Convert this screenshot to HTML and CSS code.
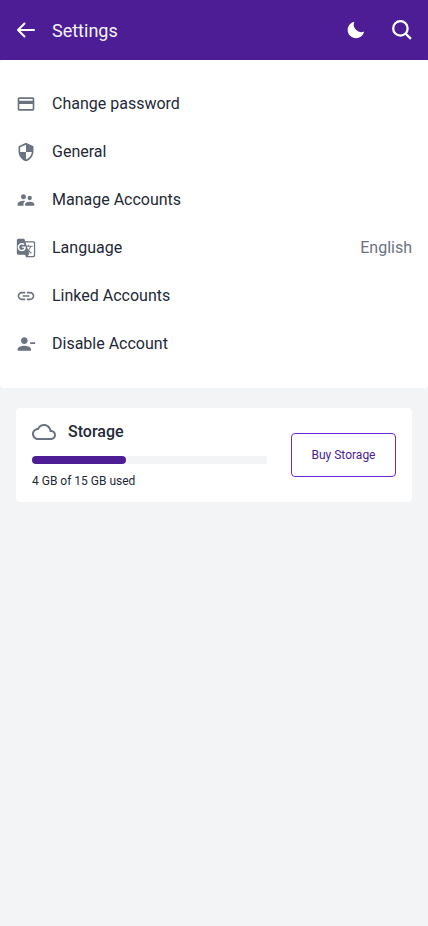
FILE: index.html
```html
<!DOCTYPE html>
<html lang="en">
<head>
<meta charset="utf-8">
<meta name="viewport" content="width=device-width, initial-scale=1">
<title>Settings</title>
<link rel="stylesheet" href="styles.css">
</head>
<body>
<header class="topbar">
  <button class="icon-button" type="button" aria-label="Back">
    <svg class="icon" viewBox="0 0 20 20" fill="none" stroke="currentColor" stroke-width="2" stroke-linecap="round" stroke-linejoin="round"><path d="M8.500 3.500L2 10l6.500 6.500M2 10h16"/></svg>
  </button>
  <h1 class="title">Settings</h1>
  <div class="actions">
    <button class="icon-button" type="button" aria-label="Dark mode">
      <svg class="icon" viewBox="0 0 24 24" fill="currentColor"><path d="M12 11.807A9.002 9.002 0 0 1 10.049 2a9.942 9.942 0 0 0-5.120 2.735c-3.905 3.905-3.905 10.237 0 14.142 3.906 3.906 10.237 3.905 14.143 0a9.946 9.946 0 0 0 2.735-5.119A9.003 9.003 0 0 1 12 11.807z"/></svg>
    </button>
    <button class="icon-button" type="button" aria-label="Search">
      <svg class="icon-large" viewBox="0 0 24 24" fill="none" stroke="currentColor" stroke-width="2.300"><circle cx="10.400" cy="10.400" r="7.200"/><path d="M15.500 15.500l5.400 5.400"/></svg>
    </button>
  </div>
</header>
<main>
  <nav class="menu" aria-label="Settings">
    <a class="row" href="#password">
      <svg class="icon" viewBox="0 0 24 24" fill="currentColor"><path d="M20 4H4c-1.110 0-1.990.89-1.990 2L2 18c0 1.110.89 2 2 2h16c1.110 0 2-.89 2-2V6c0-1.110-.89-2-2-2zm0 14H4v-6h16v6zm0-10H4V6h16v2z"/></svg>
      <span>Change password</span>
    </a>
    <a class="row" href="#general">
      <svg class="icon" viewBox="0 0 24 24" fill="currentColor"><path d="M12 1L3 5v6c0 5.550 3.840 10.740 9 12 5.160-1.260 9-6.450 9-12V5l-9-4zm0 10.990h7c-.53 4.120-3.280 7.790-7 8.940V12H5V6.300l7-3.110v8.800z"/></svg>
      <span>General</span>
    </a>
    <a class="row" href="#accounts">
      <svg class="icon" viewBox="0 0 24 24" fill="currentColor"><path d="M16.500 12c1.380 0 2.490-1.120 2.490-2.500S17.880 7 16.500 7C15.120 7 14 8.120 14 9.500s1.120 2.500 2.500 2.500zM9 11c1.660 0 2.990-1.340 2.990-3S10.660 5 9 5C7.340 5 6 6.340 6 8s1.340 3 3 3zm7.500 3c-1.830 0-5.500.92-5.500 2.750V19h11v-2.250c0-1.830-3.670-2.750-5.500-2.750zM9 13c-2.330 0-7 1.170-7 3.500V19h7v-2.250c0-.85.33-2.340 2.370-3.470C10.500 13.100 9.660 13 9 13z"/></svg>
      <span>Manage Accounts</span>
    </a>
    <a class="row" href="#language">
      <svg class="icon" viewBox="0 0 24 24" fill="currentColor"><path d="M21 4H11l-1-3H3c-1.100 0-2 .9-2 2v15c0 1.100.9 2 2 2h8l1 3h9c1.100 0 2-.9 2-2V6c0-1.100-.9-2-2-2zM7 16c-2.760 0-5-2.240-5-5s2.240-5 5-5c1.350 0 2.480.5 3.350 1.300L9.030 8.570c-.38-.36-1.040-.78-2.030-.78-1.740 0-3.150 1.440-3.150 3.210S5.260 14.210 7 14.210c2.010 0 2.840-1.440 2.920-2.410H7v-1.710h4.680c.07.31.12.61.12 1.020C11.800 13.970 9.890 16 7 16zm6.170-5.420h3.700c-.43 1.250-1.110 2.430-2.050 3.470-.31-.35-.6-.72-.86-1.100l-.79-2.370zm8.330 9.920c0 .55-.45 1-1 1H14l2-2.500-1.040-3.100 3.100 3.100.92-.92-3.300-3.250.02-.02c1.130-1.250 1.930-2.690 2.400-4.220H20v-1.300h-4.530V8h-1.290v1.290h-1.440L11.460 5.500h9.040c.55 0 1 .45 1 1v14z"/></svg>
      <span>Language</span>
      <span class="value">English</span>
    </a>
    <a class="row" href="#linked">
      <svg class="icon" viewBox="0 0 24 24" fill="currentColor"><path d="M3.900 12c0-1.710 1.390-3.100 3.100-3.100h4V7H7c-2.760 0-5 2.240-5 5s2.240 5 5 5h4v-1.900H7c-1.710 0-3.100-1.390-3.100-3.100zM8 13h8v-2H8v2zm9-6h-4v1.900h4c1.710 0 3.100 1.390 3.100 3.100s-1.390 3.100-3.100 3.100h-4V17h4c2.760 0 5-2.240 5-5s-2.240-5-5-5z"/></svg>
      <span>Linked Accounts</span>
    </a>
    <a class="row" href="#disable">
      <svg class="icon" viewBox="0 0 24 24" fill="currentColor"><path d="M14 8c0-2.210-1.790-4-4-4S6 5.790 6 8s1.790 4 4 4 4-1.790 4-4zm3 2v2h6v-2h-6zM2 18v2h16v-2c0-2.660-5.330-4-8-4s-8 1.340-8 4z"/></svg>
      <span>Disable Account</span>
    </a>
  </nav>
  <section class="storage" aria-labelledby="storage-title">
    <div class="usage">
      <div class="storage-head">
        <svg class="icon-large" viewBox="0 0 24 24" fill="currentColor"><path d="M19.350 10.040C18.670 6.590 15.640 4 12 4 9.110 4 6.600 5.640 5.350 8.040 2.340 8.360 0 10.910 0 14c0 3.310 2.690 6 6 6h13c2.760 0 5-2.240 5-5 0-2.640-2.050-4.780-4.650-4.960zM19 18H6c-2.210 0-4-1.790-4-4 0-2.050 1.530-3.760 3.560-3.970l1.070-.11.5-.95C8.080 7.140 9.940 6 12 6c2.620 0 4.880 1.860 5.390 4.430l.3 1.500 1.530.11c1.560.1 2.780 1.410 2.780 2.960 0 1.650-1.350 3-3 3z"/></svg>
        <h2 class="storage-title" id="storage-title">Storage</h2>
      </div>
      <div class="track"><div class="fill" style="width: 40%"></div></div>
      <p class="note">4 GB of 15 GB used</p>
    </div>
    <button class="buy" type="button">Buy Storage</button>
  </section>
</main>
</body>
</html>
```
FILE: styles.css
```css
* {
  box-sizing: border-box;
}

body {
  margin: 0;
  background: #f3f4f6;
  color: #1f2937;
  font-family: Roboto, "Liberation Sans", sans-serif;
  font-size: 16px;
  line-height: 24px;
}

h1,
h2,
p {
  margin: 0;
}

svg {
  display: block;
  flex: none;
}

.icon {
  width: 20px;
  height: 20px;
}

.icon-large {
  width: 24px;
  height: 24px;
}

.topbar {
  display: flex;
  align-items: center;
  gap: 16px;
  height: 60px;
  padding: 0 14px 0 16px;
  background: #4c1d95;
  color: #fff;
}

.icon-button {
  padding: 0;
  border: 0;
  background: none;
  color: inherit;
  cursor: pointer;
}

.title {
  color: #f3f4f6;
  font-size: 18px;
  font-weight: 400;
  line-height: 25px;
}

.actions {
  display: flex;
  align-items: center;
  gap: 24px;
  margin-left: auto;
}

.menu {
  padding: 20px 0;
  border-radius: 4px;
  background: #fff;
}

.row {
  display: flex;
  align-items: center;
  gap: 16px;
  padding: 12px 16px;
  color: inherit;
  text-decoration: none;
}

.row .icon,
.storage .icon-large {
  color: #6b7280;
}

.value {
  margin-left: auto;
  color: #6b7280;
}

.storage {
  display: flex;
  align-items: center;
  gap: 24px;
  margin: 20px 16px;
  padding: 12px 16px;
  border-radius: 4px;
  background: #fff;
}

.usage {
  flex: 1;
}

.storage-head {
  display: flex;
  align-items: center;
  gap: 12px;
}

.storage-title {
  font-size: 16px;
  font-weight: 500;
}

.track {
  height: 8px;
  margin: 12px 0 8px;
  border-radius: 2px;
  background: #f3f4f6;
}

.fill {
  height: 100%;
  border-radius: 4px;
  background: #4c1d95;
}

.note {
  font-size: 12px;
  line-height: 18px;
}

.buy {
  min-width: 105px;
  height: 44px;
  padding: 0 16px;
  border: 1px solid #6d28d9;
  border-radius: 4px;
  background: #fff;
  color: #4c1d95;
  font: inherit;
  font-size: 12px;
  cursor: pointer;
}
```
